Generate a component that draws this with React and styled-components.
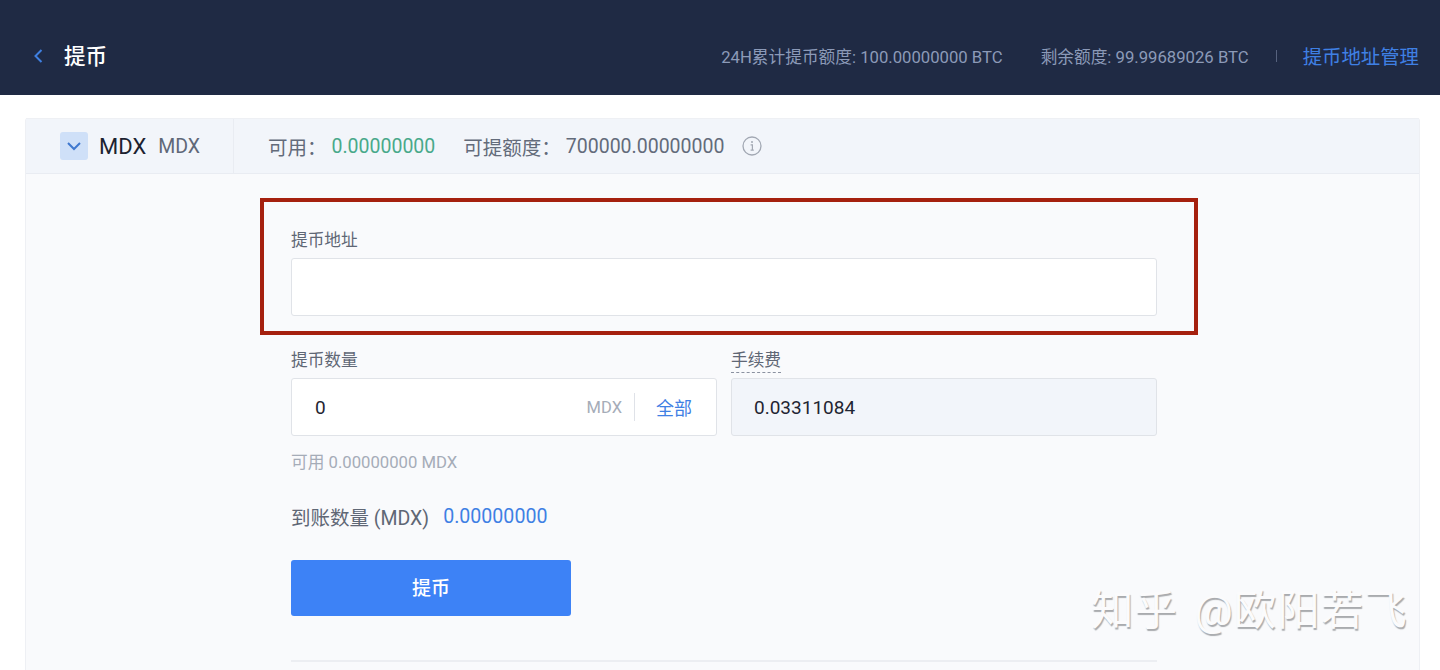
import React from "react";
import styled, { createGlobalStyle } from "styled-components";

const FONT = `"Roboto", "Noto Sans CJK SC", "Liberation Sans", sans-serif`;

const Global = createGlobalStyle`
  html, body { margin: 0; padding: 0; background: #fff; height: 670px; overflow: hidden; }
  * { box-sizing: border-box; }
  body { font-family: ${FONT}; }
`;

const Page = styled.div`
  position: relative;
  width: 1440px;
  height: 670px;
  overflow: hidden;
  background: #fff;
`;

const TopBar = styled.header`
  height: 95px;
  background: #1f2a44;
  display: flex;
  align-items: center;
  padding: 17px 21px 0 32px;
`;

const Back = styled.svg`
  width: 12px;
  height: 18px;
  color: #3f7fe0;
  margin-right: 20px;
  flex: none;
`;

const Title = styled.h1`
  margin: 1px 0 0;
  font-size: 21.5px;
  font-weight: 500;
  color: #fff;
  line-height: 28px;
`;

const Stats = styled.div`
  margin-left: auto;
  display: flex;
  align-items: center;
`;

const Stat = styled.span`
  font-size: 16.7px;
  color: #8c9ab8;
  margin-right: ${(p) => p.$gap}px;
  white-space: nowrap;
`;

const Pipe = styled.span`
  width: 1px;
  height: 12px;
  background: #56627e;
  margin-right: 26px;
`;

const ManageLink = styled.a`
  font-size: 19.4px;
  color: #3f80e4;
  white-space: nowrap;
  margin-top: -1px;
`;

const Panel = styled.section`
  margin: 23px 20px 0 25px;
  height: 560px;
  border: 1px solid #eef0f4;
  border-top: 0;
  border-radius: 3px;
  background: #f9fafc;
`;

const PanelHead = styled.div`
  height: 56px;
  display: flex;
  align-items: center;
  background: #f2f5fa;
  border-bottom: 1px solid #e9ecf2;
  border-top: 1px solid #eef0f4;
`;

const CoinCell = styled.div`
  width: 208px;
  height: 100%;
  padding-left: 34px;
  display: flex;
  align-items: center;
  border-right: 1px solid #e9ecf2;
  flex: none;
`;

const CoinToggle = styled.span`
  width: 28px;
  height: 28px;
  border-radius: 3px;
  background: #cfe0f8;
  display: flex;
  align-items: center;
  justify-content: center;
  margin-right: 11px;
`;

const CoinName = styled.span`
  font-size: 22px;
  color: #1c2230;
  margin-right: 12px;
`;

const CoinCode = styled.span`
  font-size: 19.5px;
  color: #5f6878;
`;

const Balances = styled.div`
  display: flex;
  align-items: center;
  padding-left: 34px;
  font-size: 19.5px;
  color: #636b7a;
`;

const BalanceLabel = styled.span`
  margin-right: ${(p) => p.$gap ?? 0}px;
  white-space: nowrap;
`;

const BalanceValue = styled.span`
  color: ${(p) => p.$color};
  margin-right: ${(p) => p.$gap}px;
  white-space: nowrap;
`;

const InfoIcon = styled.svg`
  width: 20px;
  height: 20px;
  color: #a2a8b3;
`;

const Form = styled.div`
  padding: 24px 0 0 234px;
  width: 1172px;
`;

const AddressBox = styled.div`
  width: 938px;
  height: 137px;
  border: 4px solid #a5200e;
  padding: 29px 37px 0 27px;
`;

const FieldsPad = styled.div`
  padding-left: 31px;
  width: 897px;
`;

const FieldLabel = styled.label`
  display: block;
  width: fit-content;
  height: 19px;
  font-size: 16.7px;
  line-height: 19px;
  color: #5f6775;
  margin-bottom: 8px;
  ${(p) => p.$dotted && `border-bottom: 1px dashed #8a91a0; height: 22px; margin-bottom: 5px;`}
`;

const InputBox = styled.div`
  height: 58px;
  border: 1px solid #e0e3e8;
  border-radius: 3px;
  background: ${(p) => (p.$disabled ? "#f2f5fa" : "#fff")};
  display: flex;
  align-items: center;
  padding: 0 24px 0 ${(p) => (p.$disabled ? 22 : 23)}px;
  font-size: 19px;
  color: #1f2532;
`;

const Row = styled.div`
  display: grid;
  grid-template-columns: 426px 426px;
  gap: 14px;
  margin-top: 16px;
`;

const Suffix = styled.span`
  margin-left: auto;
  font-size: 16.5px;
  color: #a5acb8;
`;

const Divider = styled.span`
  width: 1px;
  height: 28px;
  background: #dfe2e8;
  margin: 0 21px 0 12px;
`;

const AllLink = styled.a`
  font-size: 18px;
  color: #3f80e4;
`;

const Hint = styled.p`
  margin: 17px 0 0;
  font-size: 16.7px;
  line-height: 20px;
  color: #a5acb8;
`;

const Arrive = styled.div`
  margin-top: 31px;
  display: flex;
  align-items: center;
  height: 24px;
  font-size: 19.5px;
  color: #5f6775;
`;

const ArriveValue = styled.span`
  color: #3f80e4;
  font-size: 19.6px;
  margin-left: 14px;
`;

const Submit = styled.button`
  display: block;
  margin-top: 32px;
  width: 280px;
  height: 56px;
  border: 0;
  border-radius: 3px;
  padding: 0 0 3px;
  background: #3d82f6;
  color: #fff;
  font-family: inherit;
  font-size: 19px;
  font-weight: 500;
`;

const Rule = styled.hr`
  margin: 44px 0 0;
  width: 866px;
  height: 2px;
  border: 0;
  background: #eceef2;
`;

const Watermark = styled.div`
  position: absolute;
  left: 1091px;
  top: 584px;
  font-size: 42.5px;
  line-height: 54px;
  font-weight: 400;
  letter-spacing: 1px;
  word-spacing: 5px;
  color: #fbfbfc;
  white-space: nowrap;
  text-shadow: 1px 2px 1px #a9abae;
`;

export default function App() {
  return (
    <Page>
      <Global />
      <TopBar>
        <Back viewBox="0 0 12 18" fill="none">
          <path d="M9.5 3 L3.5 9 L9.5 15" stroke="currentColor" strokeWidth="2" />
        </Back>
        <Title>提币</Title>
        <Stats>
          <Stat $gap={38}>24H累计提币额度: 100.00000000 BTC</Stat>
          <Stat $gap={27}>剩余额度: 99.99689026 BTC</Stat>
          <Pipe />
          <ManageLink>提币地址管理</ManageLink>
        </Stats>
      </TopBar>
      <Panel>
        <PanelHead>
          <CoinCell>
            <CoinToggle>
              <svg width="16" height="10" viewBox="0 0 16 10" fill="none">
                <path d="M2 2 L8 8 L14 2" stroke="#3f78cf" strokeWidth="2" />
              </svg>
            </CoinToggle>
            <CoinName>MDX</CoinName>
            <CoinCode>MDX</CoinCode>
          </CoinCell>
          <Balances>
            <BalanceLabel $gap={5}>可用：</BalanceLabel>
            <BalanceValue $color="#48a98a" $gap={28}>0.00000000</BalanceValue>
            <BalanceLabel $gap={5}>可提额度：</BalanceLabel>
            <BalanceValue $color="#636b7a" $gap={18}>700000.00000000</BalanceValue>
            <InfoIcon viewBox="0 0 20 20" fill="none">
              <circle cx="10" cy="10" r="9" stroke="currentColor" strokeWidth="1.3" />
              <circle cx="10" cy="6" r="1" fill="currentColor" />
              <path d="M8.6 8.8 H10.4 V14 M8.6 14.2 H11.8" stroke="currentColor" strokeWidth="1.2" />
            </InfoIcon>
          </Balances>
        </PanelHead>
        <Form>
          <AddressBox>
            <FieldLabel>提币地址</FieldLabel>
            <InputBox />
          </AddressBox>
          <FieldsPad>
            <Row>
              <div>
                <FieldLabel>提币数量</FieldLabel>
                <InputBox>
                  0
                  <Suffix>MDX</Suffix>
                  <Divider />
                  <AllLink>全部</AllLink>
                </InputBox>
              </div>
              <div>
                <FieldLabel $dotted>手续费</FieldLabel>
                <InputBox $disabled>0.03311084</InputBox>
              </div>
            </Row>
            <Hint>可用 0.00000000 MDX</Hint>
            <Arrive>
              到账数量 (MDX)
              <ArriveValue>0.00000000</ArriveValue>
            </Arrive>
            <Submit>提币</Submit>
            <Rule />
          </FieldsPad>
        </Form>
      </Panel>
      <Watermark>知乎 @欧阳若飞</Watermark>
    </Page>
  );
}
